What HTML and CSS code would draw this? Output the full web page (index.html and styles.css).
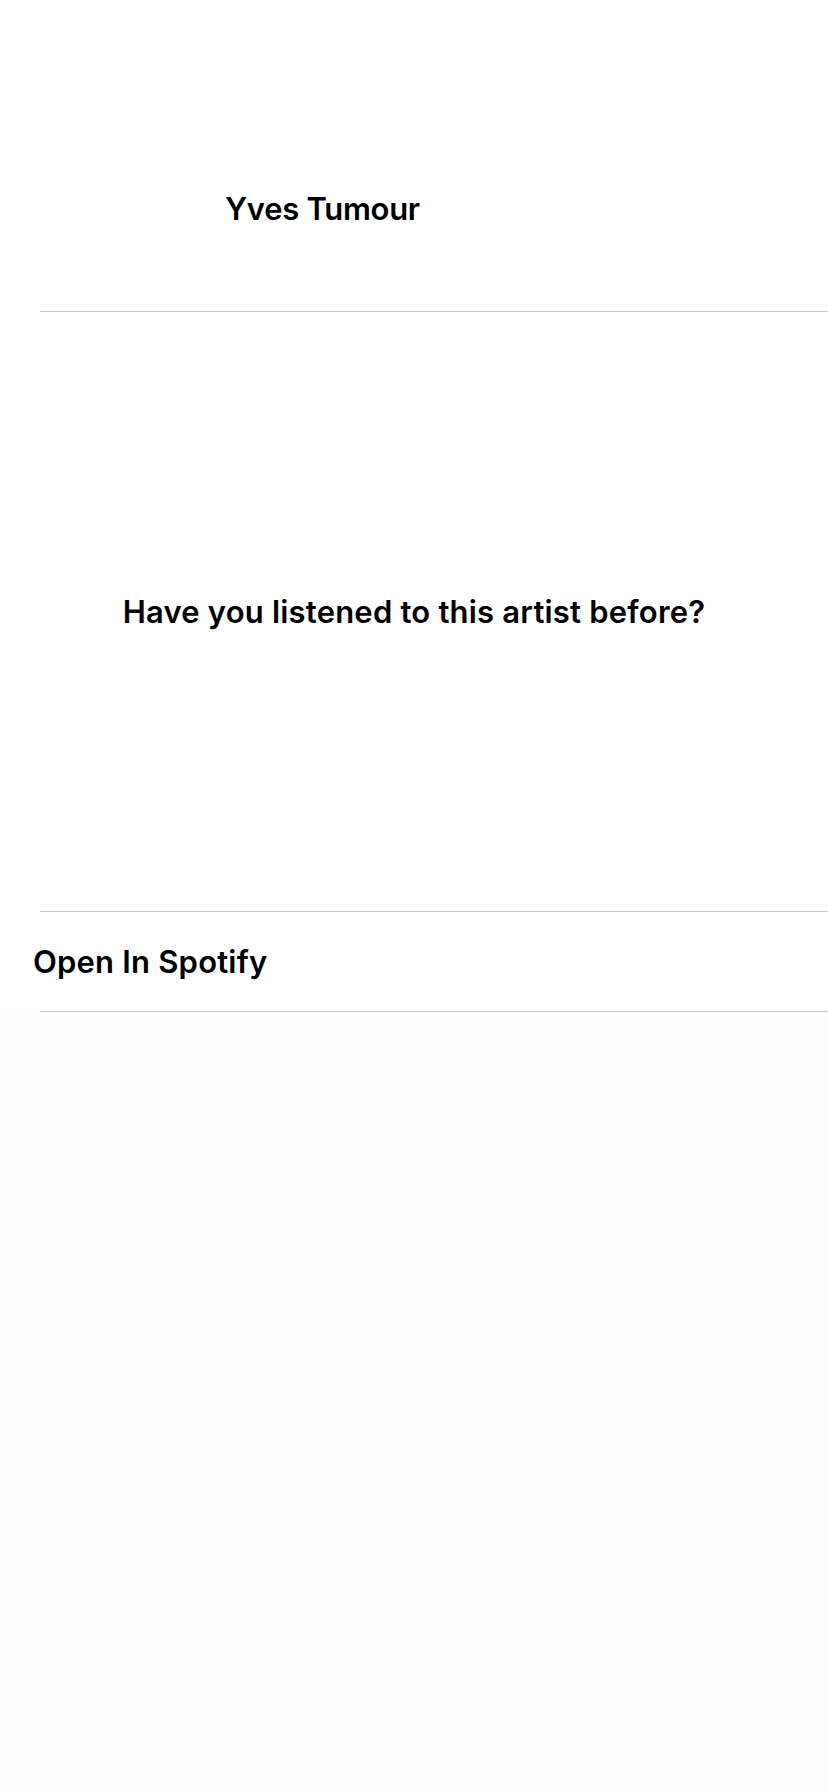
FILE: index.html
```html
<!DOCTYPE html>
<html lang="en">
<head>
<meta charset="utf-8">
<title>Yves Tumour</title>
<link rel="stylesheet" href="styles.css">
</head>
<body>
<main class="screen">
  <section class="artist">
    <div class="artist-art"></div>
    <h1 class="artist-name">Yves Tumour</h1>
  </section>
  <div class="sep"></div>
  <section class="question">
    <h2 class="question-text">Have you listened to this artist before?</h2>
  </section>
  <div class="sep"></div>
  <section class="row">
    <span class="row-label">Open In Spotify</span>
  </section>
  <div class="sep"></div>
  <div class="rest"></div>
</main>
</body>
</html>
```

FILE: styles.css
```css
* { box-sizing: border-box; }
html, body {
  margin: 0;
  padding: 0;
  background: #ffffff;
}
body {
  font-family: Inter, "Noto Sans", sans-serif;
  color: #000;
  -webkit-font-smoothing: antialiased;
}
.screen {
  width: 828px;
  min-height: 1792px;
  display: flex;
  flex-direction: column;
}
.artist {
  height: 311px;
  display: flex;
  align-items: center;
  padding-left: 40px;
  padding-top: 106px;
  gap: 20px;
}
.artist-art {
  width: 165px;
  height: 165px;
}
.artist-name {
  margin: 0;
  font-size: 31px;
  font-weight: 600;
  letter-spacing: -0.3px;
}
.sep {
  height: 1px;
  margin-left: 40px;
  background: #c8c8c8;
}
.question {
  height: 599px;
  display: flex;
  align-items: center;
  justify-content: center;
}
.question-text {
  margin: 0;
  font-size: 31px;
  font-weight: 600;
  letter-spacing: 0.2px;
}
.row {
  height: 99px;
  display: flex;
  align-items: center;
  padding-left: 33px;
}
.row-label {
  font-size: 31px;
  font-weight: 600;
  letter-spacing: 0.2px;
}
.rest {
  flex: 1;
  background: #fefefe;
}
```
